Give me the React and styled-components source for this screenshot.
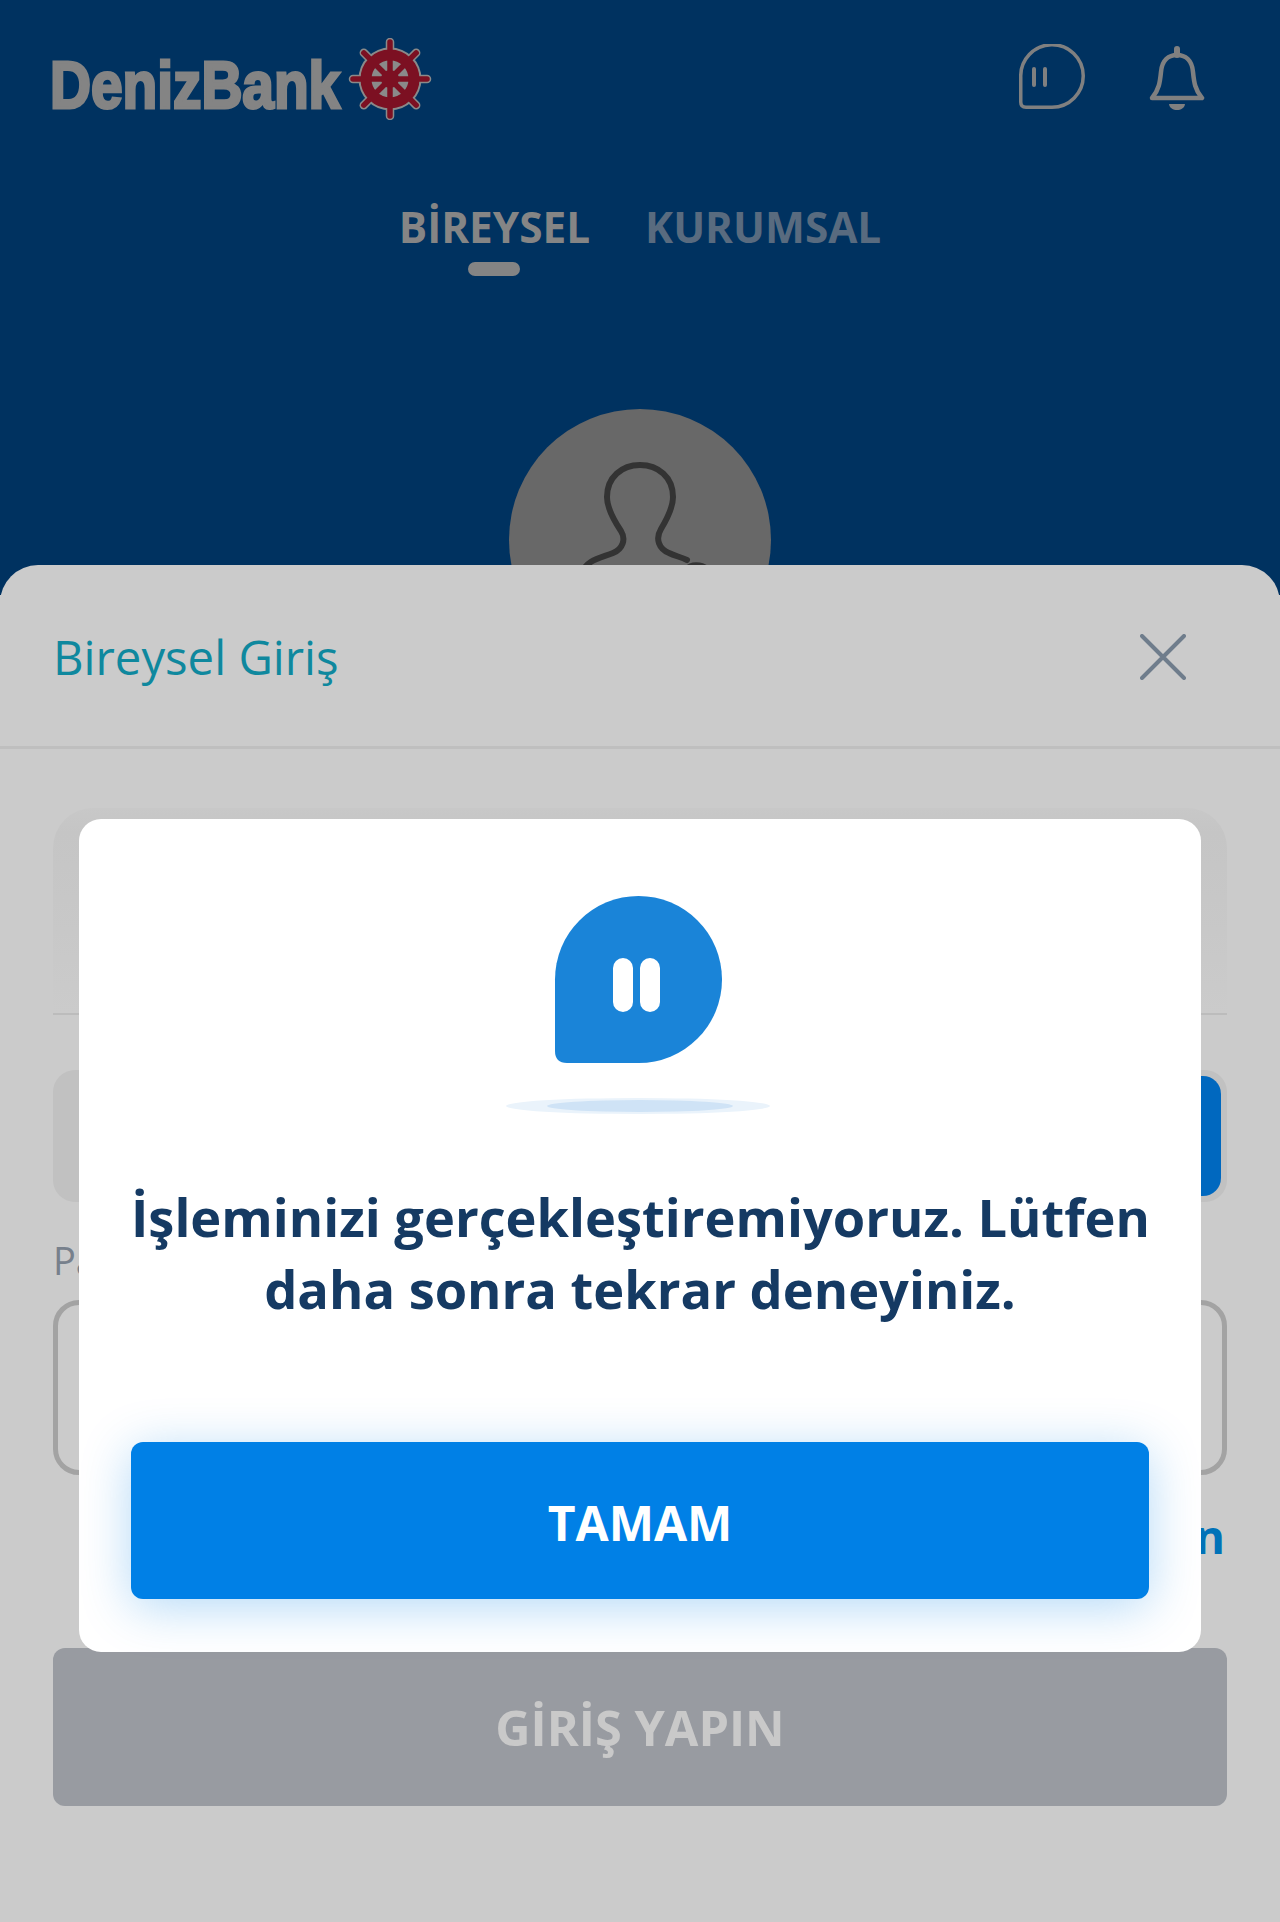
import React from 'react';
import styled, { createGlobalStyle } from 'styled-components';

const Global = createGlobalStyle`
  html, body { margin: 0; padding: 0; background: #cbcbcb; }
  * { box-sizing: border-box; }
  body { font-family: "Open Sans", "Noto Sans", sans-serif; }
`;

const Page = styled.div`
  position: relative;
  width: 1280px;
  height: 1922px;
  overflow: hidden;
  display: flex;
  flex-direction: column;
  background: #cbcbcb;
`;

const Hero = styled.header`
  height: 595px;
  flex: none;
  background: #003260;
  display: flex;
  flex-direction: column;
  overflow: hidden;
`;

const TopBar = styled.div`
  height: 157px;
  flex: none;
  display: flex;
  align-items: center;
  justify-content: space-between;
  padding: 0 75px 0 50px;
`;

const Logo = styled.div`
  display: flex;
  align-items: center;
`;

const LogoText = styled.span`
  font-family: "Liberation Sans", Arial, sans-serif;
  font-weight: 700;
  font-size: 66px;
  line-height: 1;
  color: #848484;
  -webkit-text-stroke: 3px #848484;
  transform: scaleX(0.86);
  transform-origin: left center;
  margin-right: -44px;
  white-space: nowrap;
  position: relative;
  top: 6px;
`;

const WheelSvg = styled.svg`
  width: 84px;
  height: 82px;
  flex: none;
  margin-left: 5px;
`;

const TopIcons = styled.div`
  display: flex;
  align-items: center;
  gap: 65px;
`;

const BubbleIcon = styled.svg`
  width: 66px;
  height: 65px;
  margin-bottom: 4px;
  position: relative;
  left: 1px;
`;

const TabRow = styled.nav`
  display: flex;
  justify-content: center;
  gap: 55px;
  margin-top: 45px;
`;

const Tab = styled.div`
  display: flex;
  flex-direction: column;
  align-items: center;
  font-weight: 700;
  font-size: 42.3px;
  line-height: 50px;
  color: ${(p) => (p.$active ? '#858585' : '#596b7f')};
`;

const TabMark = styled.span`
  display: block;
  width: 52px;
  height: 14px;
  border-radius: 7px;
  margin-top: 10px;
  background: ${(p) => (p.$active ? '#848484' : 'transparent')};
`;

const Avatar = styled.div`
  width: 262px;
  height: 262px;
  border-radius: 50%;
  background: #686868;
  margin: 133px auto 0;
  flex: none;
`;

const AvatarIcon = styled.svg`
  display: block;
  width: 262px;
  height: 262px;
`;

const Sheet = styled.section`
  flex: 1;
  margin-top: -30px;
  position: relative;
  background: #cbcbcb;
  border-radius: 38px 38px 0 0;
  display: flex;
  flex-direction: column;
`;

const SheetHeader = styled.div`
  height: 184px;
  flex: none;
  display: flex;
  align-items: center;
  justify-content: space-between;
  padding: 3px 94px 0 53px;
  border-bottom: 3px solid #bfbfbf;
`;

const SheetTitle = styled.h2`
  margin: 0;
  font-weight: 500;
  font-size: 47.3px;
  line-height: 56px;
  color: #0f889e;
`;

const SheetBody = styled.div`
  flex: 1;
  padding: 0 53px;
  display: flex;
  flex-direction: column;
`;

const Card = styled.div`
  height: 207px;
  margin-top: 59px;
  border-radius: 40px 40px 0 0;
  background: linear-gradient(#c8c8c8, #c5c5c5 12%, #c8c8c8 60%, #cbcbcb);
  border-bottom: 2px solid #bcbcbc;
`;

const Segmented = styled.div`
  height: 132px;
  margin-top: 55px;
  border-radius: 22px;
  background: #c1c1c1;
  padding: 6px;
  display: flex;
`;

const Segment = styled.div`
  flex: 1;
  border-radius: 18px;
  background: ${(p) => (p.$active ? '#0068bf' : 'transparent')};
`;

const FieldLabel = styled.label`
  margin-top: 32px;
  font-size: 38px;
  line-height: 52px;
  color: #77808c;
`;

const FieldBox = styled.div`
  height: 175px;
  margin-top: 14px;
  border: 5px solid #a3a3a3;
  border-radius: 26px;
`;

const FieldLink = styled.a`
  align-self: flex-end;
  margin-top: 30px;
  padding-right: 2px;
  font-weight: 700;
  font-size: 46px;
  line-height: 62px;
  color: #0072b8;
`;

const Submit = styled.button`
  height: 158px;
  margin-top: 81px;
  border: 0;
  border-radius: 12px;
  background: #989ba1;
  color: #c9c9c9;
  font-family: inherit;
  font-weight: 700;
  font-size: 48.7px;
`;

const Scrim = styled.div`
  position: absolute;
  inset: 0;
  padding: 819px 79px 0;
`;

const Modal = styled.div`
  background: #fff;
  border-radius: 22px;
  height: 833px;
  padding: 77px 52px 53px;
  display: flex;
  flex-direction: column;
  align-items: center;
`;

const ModalIcon = styled.svg`
  width: 264px;
  height: 218px;
  flex: none;
  margin-right: 5px;
`;

const Message = styled.h1`
  margin: 67px 0 0;
  width: 100%;
  text-align: center;
  white-space: nowrap;
  font-weight: 700;
  font-size: 52.4px;
  line-height: 72px;
  color: #153a63;
`;

const OkButton = styled.button`
  width: 100%;
  height: 157px;
  margin-top: 117px;
  padding: 3px 0 0;
  border: 0;
  border-radius: 12px;
  background: #0080e6;
  color: #fff;
  font-family: inherit;
  font-weight: 700;
  font-size: 48px;
  box-shadow: 0 8px 50px rgba(0, 128, 230, 0.3);
`;

const wheelAngles = [0, 45, 90, 135, 180, 225, 270, 315];

function Wheel() {
  return (
    <WheelSvg viewBox="0 0 84 82">
      <g transform="translate(42 41)">
        {wheelAngles.map((a) => (
          <g key={a} transform={`rotate(${a})`}>
            <line x1="0" y1="-28" x2="0" y2="-37" stroke="#8a8a8a" strokeWidth="8.5" strokeLinecap="round" />
          </g>
        ))}
        <circle r="31.5" fill="#8a8a8a" />
        {wheelAngles.map((a) => (
          <g key={a} transform={`rotate(${a})`}>
            <line x1="0" y1="-26" x2="0" y2="-37" stroke="#7c1022" strokeWidth="5.5" strokeLinecap="round" />
            <line x1="0" y1="0" x2="0" y2="-22" stroke="#7c1022" strokeWidth="5.5" />
          </g>
        ))}
        <circle r="24" fill="none" stroke="#7c1022" strokeWidth="11" />
        <circle r="9" fill="#7c1022" />
      </g>
    </WheelSvg>
  );
}

function OutlineBubble() {
  return (
    <BubbleIcon viewBox="0 0 66 65" fill="none" stroke="#808080" strokeWidth="3.5">
      <path d="M1.75 33 A31.25 31.25 0 1 1 33 63.25 L7 63.25 Q1.75 63.25 1.75 58 Z" />
      <path d="M15 25 V41 M26 25 V41" strokeWidth="4" strokeLinecap="round" />
    </BubbleIcon>
  );
}

function Bell() {
  return (
    <svg width="56" height="66" viewBox="0 0 56 66" fill="none" stroke="#808080" strokeWidth="4.5" strokeLinejoin="round">
      <path d="M3 52 C10 44 11 36 12 26 C13 14 20 9 28 9 C36 9 43 14 44 26 C45 36 46 44 53 52 Z" />
      <path d="M28 3 V9" strokeWidth="6" strokeLinecap="round" />
      <path d="M20 58 H36 C35 66 21 66 20 58 Z" fill="#808080" stroke="none" />
    </svg>
  );
}

function Close() {
  return (
    <svg width="46" height="46" viewBox="0 0 46 46" stroke="#6f7d8c" strokeWidth="4" strokeLinecap="round">
      <path d="M2 2 L44 44 M44 2 L2 44" />
    </svg>
  );
}

export default function App() {
  return (
    <Page>
      <Global />
      <Hero>
        <TopBar>
          <Logo>
            <LogoText>DenizBank</LogoText>
            <Wheel />
          </Logo>
          <TopIcons>
            <OutlineBubble />
            <Bell />
          </TopIcons>
        </TopBar>
        <TabRow>
          <Tab $active>
            BİREYSEL
            <TabMark $active />
          </Tab>
          <Tab>
            KURUMSAL
            <TabMark />
          </Tab>
        </TabRow>
        <Avatar>
          <AvatarIcon viewBox="0 0 262 262" fill="none" stroke="#333" strokeWidth="6" strokeLinecap="round">
            <path d="M72 165 C78 150 92 149 104 144 C114 140 117 130 112 122 C104 110 98 98 98 88 C98 68 113 56 131 56 C149 56 164 68 164 88 C164 98 158 110 152 120 C146 130 150 140 160 144 C166 147 172 148 178 151" />
            <path d="M178 160 C182 155 192 155 198 160" />
          </AvatarIcon>
        </Avatar>
      </Hero>
      <Sheet>
        <SheetHeader>
          <SheetTitle>Bireysel Giriş</SheetTitle>
          <Close />
        </SheetHeader>
        <SheetBody>
          <Card />
          <Segmented>
            <Segment />
            <Segment $active />
          </Segmented>
          <FieldLabel>Parola</FieldLabel>
          <FieldBox />
          <FieldLink>Parola Alın</FieldLink>
          <Submit>GİRİŞ YAPIN</Submit>
        </SheetBody>
      </Sheet>
      <Scrim>
        <Modal>
          <ModalIcon viewBox="0 0 264 218">
            <ellipse cx="132" cy="210" rx="132" ry="8" fill="#eaf3fb" />
            <ellipse cx="134" cy="210" rx="93" ry="6" fill="#cfe3f6" />
            <path d="M49 83.5 A83.5 83.5 0 1 1 132.5 167 L61 167 Q49 167 49 155 Z" fill="#1a84d8" />
            <rect x="107" y="62" width="20" height="54" rx="10" fill="#fff" />
            <rect x="134" y="62" width="20" height="54" rx="10" fill="#fff" />
          </ModalIcon>
          <Message>
            İşleminizi gerçekleştiremiyoruz. Lütfen
            <br />
            daha sonra tekrar deneyiniz.
          </Message>
          <OkButton>TAMAM</OkButton>
        </Modal>
      </Scrim>
    </Page>
  );
}
